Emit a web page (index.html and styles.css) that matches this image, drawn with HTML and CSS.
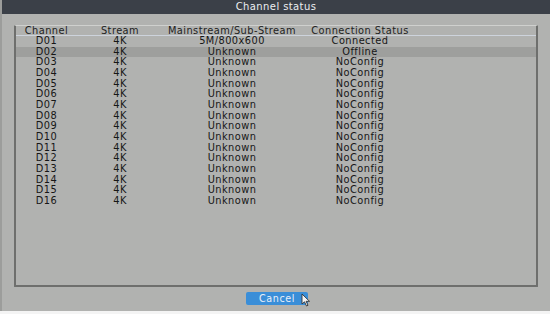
FILE: index.html
```html
<!DOCTYPE html>
<html>
<head>
<meta charset="utf-8">
<link rel="stylesheet" href="styles.css">
</head>
<body>
<div class="window">
  <div class="titlebar">Channel status</div>
  <div class="content">
    <div class="listbox">
      <div class="row head">
        <span>Channel</span><span>Stream</span><span>Mainstream/Sub-Stream</span><span>Connection Status</span>
      </div>
      <div class="row"><span>D01</span><span>4K</span><span>5M/800x600</span><span>Connected</span></div>
      <div class="row sel"><span>D02</span><span>4K</span><span>Unknown</span><span>Offline</span></div>
      <div class="row"><span>D03</span><span>4K</span><span>Unknown</span><span>NoConfig</span></div>
      <div class="row"><span>D04</span><span>4K</span><span>Unknown</span><span>NoConfig</span></div>
      <div class="row"><span>D05</span><span>4K</span><span>Unknown</span><span>NoConfig</span></div>
      <div class="row"><span>D06</span><span>4K</span><span>Unknown</span><span>NoConfig</span></div>
      <div class="row"><span>D07</span><span>4K</span><span>Unknown</span><span>NoConfig</span></div>
      <div class="row"><span>D08</span><span>4K</span><span>Unknown</span><span>NoConfig</span></div>
      <div class="row"><span>D09</span><span>4K</span><span>Unknown</span><span>NoConfig</span></div>
      <div class="row"><span>D10</span><span>4K</span><span>Unknown</span><span>NoConfig</span></div>
      <div class="row"><span>D11</span><span>4K</span><span>Unknown</span><span>NoConfig</span></div>
      <div class="row"><span>D12</span><span>4K</span><span>Unknown</span><span>NoConfig</span></div>
      <div class="row"><span>D13</span><span>4K</span><span>Unknown</span><span>NoConfig</span></div>
      <div class="row"><span>D14</span><span>4K</span><span>Unknown</span><span>NoConfig</span></div>
      <div class="row"><span>D15</span><span>4K</span><span>Unknown</span><span>NoConfig</span></div>
      <div class="row"><span>D16</span><span>4K</span><span>Unknown</span><span>NoConfig</span></div>
    </div>
    <div class="footer">
      <div class="btnwrap">
        <button class="btn">Cancel</button>
        <svg class="cursor" width="10" height="14" viewBox="0 0 10 14"><path d="M1 1 L1 11 L3.5 8.8 L5.5 13 L7 12.3 L5.1 8.3 L8.5 8.3 Z" fill="#f4f4f4" stroke="#333" stroke-width="0.9" stroke-linejoin="round"/></svg>
      </div>
    </div>
  </div>
</div>
</body>
</html>
```
FILE: styles.css
```css
html, body {
  margin: 0;
  padding: 0;
  background: #f4f4f4;
}
body {
  width: 550px;
  height: 314px;
  overflow: hidden;
  font-family: "DejaVu Sans", "Liberation Sans", sans-serif;
}
.window {
  height: 311px;
  background: #b1b2b0;
  border-left: 2px solid #9c9d9b;
  box-sizing: border-box;
  display: flex;
  flex-direction: column;
}
.titlebar {
  height: 14px;
  background: #3b4048;
  color: #eceef0;
  font-size: 10px;
  letter-spacing: 0.4px;
  line-height: 14px;
  text-align: center;
}
.content {
  flex: 1;
  padding: 11px 12px 0 12px;
  display: flex;
  flex-direction: column;
}
.listbox {
  height: 262px;
  box-sizing: border-box;
  border-top: 1px solid #cfd0ce;
  border-left: 2px solid #6e6f6d;
  border-right: 2px solid #6e6f6d;
  border-bottom: 2px solid #6e6f6d;
  border-radius: 1px;
}
.row {
  display: grid;
  grid-template-columns: 61px 86px 138px 118px;
  height: 10.67px;
  font-size: 9.8px;
  line-height: 10.67px;
  color: #161616;
  letter-spacing: 0.45px;
}
.row span {
  text-align: center;
  white-space: nowrap;
}
.row.head {
  height: 9px;
  line-height: 9px;
  border-bottom: 1px solid #cdd3dc;
  color: #222;
}
.row.sel {
  background: #9e9f9d;
}
.footer {
  display: flex;
  justify-content: center;
  padding-top: 5px;
  padding-left: 2px;
}
.btnwrap {
  position: relative;
}
.btn {
  width: 62px;
  height: 13px;
  border: none;
  border-radius: 2px;
  background: #3a8ed8;
  color: #e8eff8;
  font-family: "DejaVu Sans", "Liberation Sans", sans-serif;
  font-size: 9.6px;
  letter-spacing: 0.6px;
  line-height: 13px;
  padding: 0;
  display: block;
}
.cursor {
  position: absolute;
  left: 55px;
  top: 1px;
}
```
